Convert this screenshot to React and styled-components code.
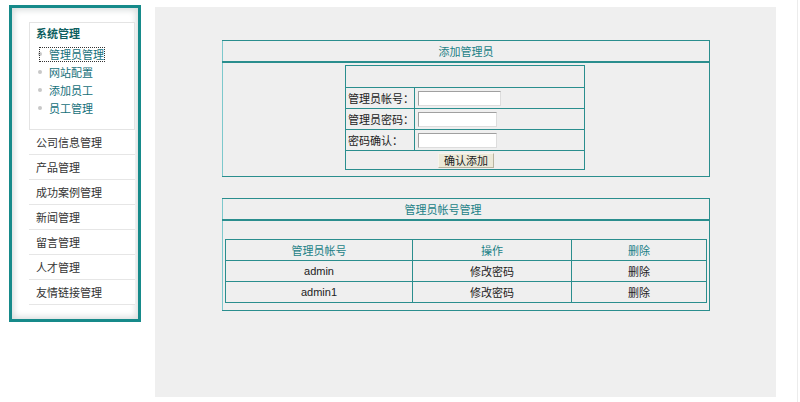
import React from "react";
import styled, { createGlobalStyle } from "styled-components";

const GlobalStyle = createGlobalStyle`
  html, body {
    margin: 0;
    padding: 0;
    background: #ffffff;
    font-family: "Noto Sans CJK SC", "Liberation Sans", sans-serif;
    font-size: 11px;
    color: #222;
  }
`;

const subMenu = ["管理员管理", "网站配置", "添加员工", "员工管理"];
const menu = [
  "公司信息管理",
  "产品管理",
  "成功案例管理",
  "新闻管理",
  "留言管理",
  "人才管理",
  "友情链接管理",
];
const admins = ["admin", "admin1"];

function App() {
  return (
    <Page>
      <GlobalStyle />
      <Sidebar>
        <MenuBox>
          <MenuTitle>系统管理</MenuTitle>
          {subMenu.map((s, i) => (
            <SubItem key={s}>
              <Bullet />
              <SubLabel $focus={i === 0}>{s}</SubLabel>
            </SubItem>
          ))}
        </MenuBox>
        {menu.map((m) => (
          <MenuItem key={m}>{m}</MenuItem>
        ))}
      </Sidebar>

      <Main>
        <Panel>
          <tbody>
            <tr>
              <PanelHead>添加管理员</PanelHead>
            </tr>
            <tr>
              <PanelBody>
                <FormTable>
                  <tbody>
                    <tr>
                      <FormCell colSpan={2} $h={21} />
                    </tr>
                    <tr>
                      <LabelCell>管理员帐号：</LabelCell>
                      <FormCell>
                        <Field $w={83} />
                      </FormCell>
                    </tr>
                    <tr>
                      <LabelCell>管理员密码：</LabelCell>
                      <FormCell>
                        <Field $w={79} type="password" />
                      </FormCell>
                    </tr>
                    <tr>
                      <LabelCell>密码确认：</LabelCell>
                      <FormCell>
                        <Field $w={79} type="password" />
                      </FormCell>
                    </tr>
                    <tr>
                      <ButtonCell colSpan={2}>
                        <AddButton>确认添加</AddButton>
                      </ButtonCell>
                    </tr>
                  </tbody>
                </FormTable>
              </PanelBody>
            </tr>
          </tbody>
        </Panel>

        <Panel $gap>
          <tbody>
            <tr>
              <PanelHead $shift>管理员帐号管理</PanelHead>
            </tr>
            <tr>
              <ListBody>
                <ListTable>
                  <tbody>
                    <tr>
                      <HeadCell $w={186}>管理员帐号</HeadCell>
                      <HeadCell $w={158}>操作</HeadCell>
                      <HeadCell>删除</HeadCell>
                    </tr>
                    {admins.map((a) => (
                      <tr key={a}>
                        <DataCell $latin>{a}</DataCell>
                        <DataCell>修改密码</DataCell>
                        <DataCell>删除</DataCell>
                      </tr>
                    ))}
                  </tbody>
                </ListTable>
              </ListBody>
            </tr>
          </tbody>
        </Panel>
      </Main>
      <EdgeLine />
    </Page>
  );
}

export default App;

const Page = styled.div`
  display: flex;
  align-items: flex-start;
  height: 402px;
  overflow: hidden;
  position: relative;
`;

const Sidebar = styled.div`
  margin: 5px 0 0 9px;
  height: 297px;
  width: 106px;
  border: 3px solid #168a8a;
  padding: 14px 3px 0 17px;
  box-sizing: content-box;
  background: #ffffff;
  box-shadow: inset 0 0 6px 2px #d8dcdc;
`;

const MenuBox = styled.div`
  border: 1px solid #e4e4e4;
  height: 105px;
  padding: 1px 0 0 6px;
  background: #fff;
`;

const MenuTitle = styled.div`
  font-weight: bold;
  color: #0d5f5f;
  font-size: 11px;
  height: 18px;
  line-height: 18px;
  margin-bottom: 3px;
`;

const SubItem = styled.div`
  display: flex;
  align-items: center;
  height: 18px;
`;

const Bullet = styled.span`
  width: 4px;
  height: 4px;
  border-radius: 50%;
  background: #c8c8c8;
  margin: 0 7px 0 2px;
`;

const SubLabel = styled.span`
  color: #15707a;
  font-size: 11px;
  line-height: 13px;
  outline: ${(p) => (p.$focus ? "1px dotted #333" : "none")};
  margin-left: ${(p) => (p.$focus ? "-9px" : "0")};
  padding-left: ${(p) => (p.$focus ? "9px" : "0")};
`;

const MenuItem = styled.div`
  height: 24px;
  line-height: 24px;
  border-bottom: 1px solid #e6e6e6;
  padding-left: 7px;
  color: #333;
  font-size: 11px;
  background: #fff;
`;

const Main = styled.div`
  margin: 7px 0 0 14px;
  width: 621px;
  height: 390px;
  background: #efefef;
  padding-top: 33px;
  box-sizing: border-box;
  display: flex;
  flex-direction: column;
  align-items: flex-start;
`;

const Panel = styled.table`
  margin-left: 67px;
  margin-top: ${(p) => (p.$gap ? "21px" : "0")};
  width: 488px;
  border-collapse: collapse;
  border: 1px solid #2a8e8e;
  border-left-color: #7cc8cc;
`;

const PanelHead = styled.td`
  height: 20px;
  border-bottom: 2px solid #2a8e8e;
  color: #1b7f86;
  text-align: center;
  font-size: 11px;
  padding: ${(p) => (p.$shift ? "0 46px 0 0" : "0")};
`;

const PanelBody = styled.td`
  padding: 2px 0 6px 122px;
`;

const FormTable = styled.table`
  border-collapse: collapse;
  width: 240px;
  border: 1px solid #6cc4c8;
`;

const FormCell = styled.td`
  border: 1px solid #2a8e8e;
  height: ${(p) => (p.$h ? `${p.$h}px` : "20px")};
  padding: 0 0 0 3px;
`;

const LabelCell = styled(FormCell)`
  width: 66px;
  padding: 0 0 0 2px;
  font-size: 11px;
  color: #222;
`;

const ButtonCell = styled(FormCell)`
  text-align: center;
  height: 18px;
  padding: 0 0 0 2px;
`;

const Field = styled.input`
  display: block;
  width: ${(p) => p.$w}px;
  height: 15px;
  box-sizing: border-box;
  border: 1px solid #a0a0a0;
  border-right-color: #ddd;
  border-bottom-color: #ddd;
  background: #fff;
  padding: 0;
`;

const AddButton = styled.button`
  font-family: "Noto Sans CJK SC", sans-serif;
  font-size: 11px;
  height: 15px;
  width: 56px;
  padding: 0;
  line-height: 13px;
  color: #222;
  background: #ece9d8;
  border: 1px solid #b8b4a0;
  border-top-color: #f6f4ec;
  border-left-color: #f6f4ec;
`;

const ListBody = styled.td`
  padding: 18px 2px 7px 2px;
`;

const ListTable = styled.table`
  width: 100%;
  border-collapse: collapse;
  border: 1px solid #2a8e8e;
`;

const HeadCell = styled.td`
  border: 1px solid #2a8e8e;
  width: ${(p) => (p.$w ? `${p.$w}px` : "auto")};
  height: 20px;
  text-align: center;
  color: #1b7f86;
  font-size: 11px;
  padding: 0;
`;

const DataCell = styled.td`
  border: 1px solid #2a8e8e;
  height: 20px;
  text-align: center;
  color: #222;
  padding: 0;
  font-size: 11px;
  font-family: ${(p) =>
    p.$latin ? '"Liberation Sans", sans-serif' : '"Noto Sans CJK SC", sans-serif'};
`;

const EdgeLine = styled.div`
  position: absolute;
  left: 797px;
  top: 0;
  width: 1px;
  height: 402px;
  background: #ececec;
`;
